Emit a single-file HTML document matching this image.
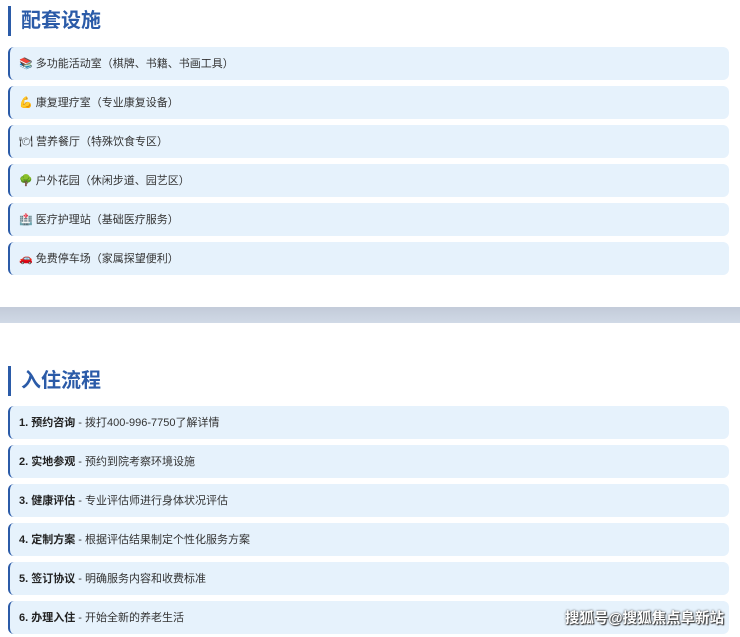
<!DOCTYPE html>
<html><head><meta charset="utf-8"><style>
body{margin:0;width:740px;height:637px;background:#fff;font-family:"Liberation Sans","Noto Sans CJK SC",sans-serif;position:relative;overflow:hidden}
.h{position:absolute;left:8px;border-left:3px solid #2b5ba8;padding-left:10px;font-size:20px;font-weight:bold;color:#2b5ba8;line-height:30px;height:30px}
.it{position:absolute;left:8px;width:721px;height:33px;background:#e6f2fc;border-left:2px solid #2b5ba8;border-radius:6px;box-sizing:border-box;padding-left:9px;font-size:11px;color:#333;line-height:35px;white-space:nowrap}
.it b{color:#222}
.band{position:absolute;left:0;top:307px;width:740px;height:16px;background:linear-gradient(#c3cbd9,#d0d9e6)}
.wm{position:absolute;right:16px;top:607px;font-size:14.5px;font-weight:bold;color:#fff;text-shadow:0 0 2px #333,1px 1px 1px #333}
</style></head><body>
<div class="h" style="top:6px">配套设施</div>
<div class="it" style="top:47px">📚 多功能活动室（棋牌、书籍、书画工具）</div>
<div class="it" style="top:86px">💪 康复理疗室（专业康复设备）</div>
<div class="it" style="top:125px">🍽 营养餐厅（特殊饮食专区）</div>
<div class="it" style="top:164px">🌳 户外花园（休闲步道、园艺区）</div>
<div class="it" style="top:203px">🏥 医疗护理站（基础医疗服务）</div>
<div class="it" style="top:242px">🚗 免费停车场（家属探望便利）</div>
<div class="band"></div>
<div class="h" style="top:366px">入住流程</div>
<div class="it" style="top:406px"><b>1. 预约咨询</b> - 拨打400-996-7750了解详情</div>
<div class="it" style="top:445px"><b>2. 实地参观</b> - 预约到院考察环境设施</div>
<div class="it" style="top:484px"><b>3. 健康评估</b> - 专业评估师进行身体状况评估</div>
<div class="it" style="top:523px"><b>4. 定制方案</b> - 根据评估结果制定个性化服务方案</div>
<div class="it" style="top:562px"><b>5. 签订协议</b> - 明确服务内容和收费标准</div>
<div class="it" style="top:601px"><b>6. 办理入住</b> - 开始全新的养老生活</div>
<div class="wm">搜狐号@搜狐焦点阜新站</div>
</body></html>
